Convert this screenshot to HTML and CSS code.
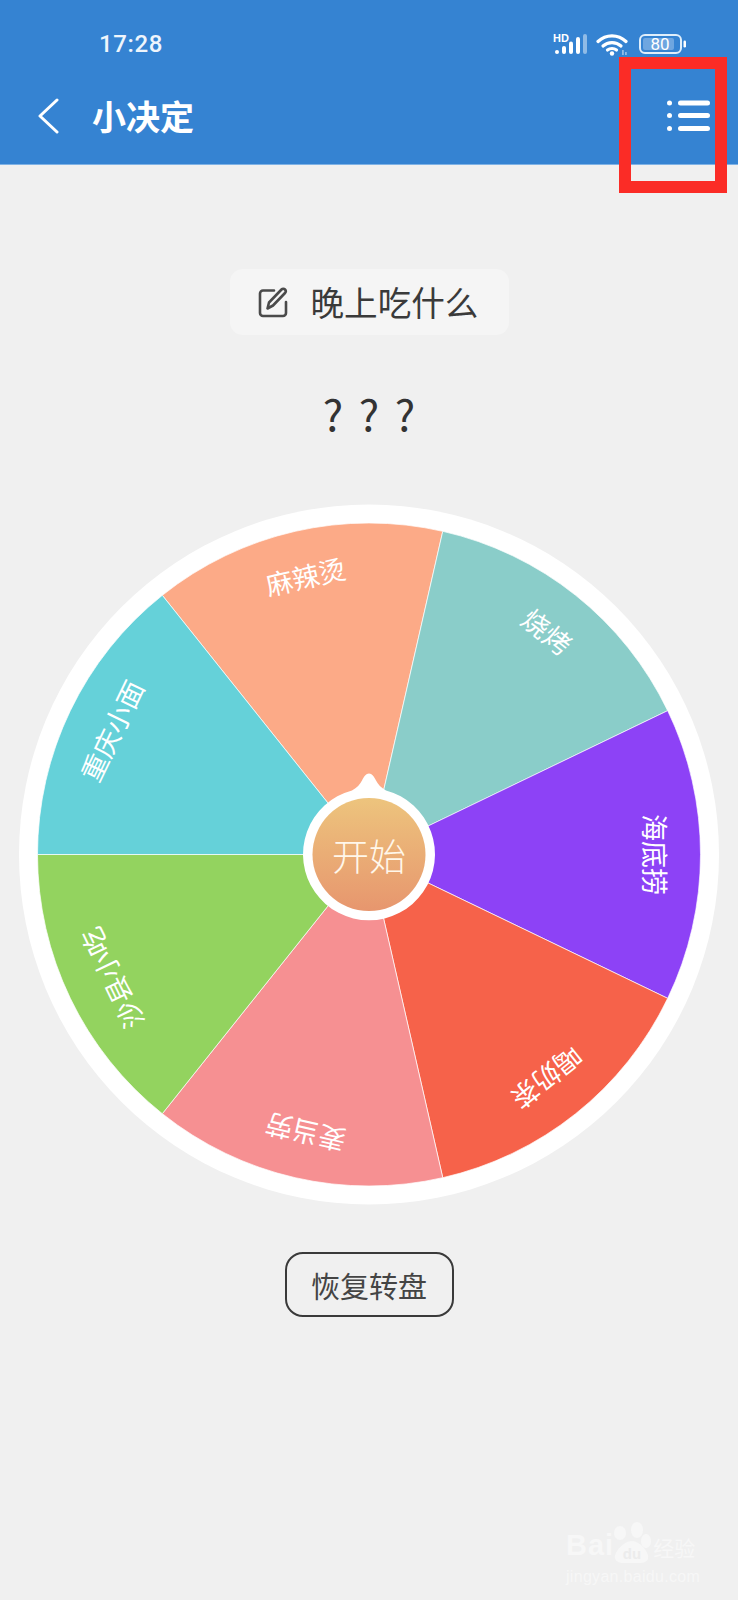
FILE: index.html
```html
<!DOCTYPE html>
<html lang="zh-CN">
<head>
<meta charset="utf-8">
<title>小决定</title>
<link rel="stylesheet" href="styles.css">
</head>
<body>
<div class="page">
  <header class="header">
    <div class="status">
      <span class="time">17:28</span>
      <div class="status-icons">
        <svg class="icon-signal" width="34" height="22" viewBox="0 0 34 22">
          <text class="hd" x="0" y="9">HD</text>
          <rect class="w" x="2" y="17" width="4" height="4" rx="2"/>
          <rect class="w" x="9" y="13" width="4" height="8" rx="2"/>
          <rect class="w" x="16" y="8.500" width="4" height="12.500" rx="2"/>
          <rect class="w" x="23" y="4" width="4" height="17" rx="2"/>
          <rect class="w dim" x="30" y="1" width="4" height="20" rx="2"/>
        </svg>
        <svg class="icon-wifi" width="32" height="23" viewBox="0 0 32 23">
          <path class="arc a1" d="M2 8.500C10 1 22 1 30 8.500"/>
          <path class="arc a2" d="M7 13C12 8.500 20 8.500 25 13"/>
          <path class="arc a3" d="M11.500 17C14 15 18 15 20.500 17"/>
          <circle class="w" cx="16" cy="20.500" r="2.200"/>
          <rect class="w dim" x="26" y="17" width="1.800" height="5"/>
          <rect class="w dim" x="29" y="19" width="1.800" height="3"/>
        </svg>
        <svg class="icon-battery" width="47" height="21" viewBox="0 0 47 21">
          <rect class="batt-o" x="1" y="1" width="41" height="18" rx="5"/>
          <rect class="batt-f" x="4" y="4" width="31" height="12" rx="2"/>
          <text class="batt-t" x="21" y="16" text-anchor="middle">80</text>
          <rect class="w" x="44.500" y="6.500" width="2.500" height="7" rx="1.200"/>
        </svg>
      </div>
    </div>
    <nav class="nav">
      <svg class="back" width="22" height="36" viewBox="0 0 22 36"><path d="M20 2L3 18L20 34"/></svg>
      <h1 class="title">小决定</h1>
      <svg class="menu" width="43" height="32" viewBox="0 0 43 32">
        <circle cx="2.500" cy="3" r="2.500"/><circle cx="2.500" cy="15.500" r="2.500"/><circle cx="2.500" cy="28.500" r="2.500"/>
        <path d="M13.500 3H40.500M13.500 15.500H40.500M13.500 28.500H40.500"/>
      </svg>
    </nav>
  </header>

  <main class="main">
    <div class="pill">
      <svg class="edit" width="30" height="31" viewBox="0 0 30 31">
        <path d="M16 3.500H5a3 3 0 0 0-3 3V26a3 3 0 0 0 3 3h20a3 3 0 0 0 3-3V15"/>
        <path d="M9.500 21.500L11 15.500L23.500 2.500a2.400 2.400 0 0 1 3.500 0a2.600 2.600 0 0 1 0 3.500L15 18.500Z"/>
      </svg>
      <span class="pill-text">晚上吃什么</span>
    </div>
    <div class="result">? ? ?</div>

    <svg class="wheel" width="700" height="701" viewBox="-350 -350.500 700 701">
      <defs>
        <linearGradient id="hubfill" x1="0" y1="0" x2="0" y2="1">
          <stop offset="0" stop-color="#edc47d"/>
          <stop offset="1" stop-color="#e7966e"/>
        </linearGradient>
      </defs>
      <circle class="rim" r="350"/>
      <g transform="rotate(-12.857)">
        <path class="slice s1" d="M0 0L-143.830 -298.670A331.500 331.500 0 0 1 143.830 -298.670Z"/>
        <text class="label" y="-286">麻辣烫</text>
      </g>
      <g transform="rotate(38.571)">
        <path class="slice s2" d="M0 0L-143.830 -298.670A331.500 331.500 0 0 1 143.830 -298.670Z"/>
        <text class="label" y="-286">烧烤</text>
      </g>
      <g transform="rotate(90)">
        <path class="slice s3" d="M0 0L-143.830 -298.670A331.500 331.500 0 0 1 143.830 -298.670Z"/>
        <text class="label" y="-286">海底捞</text>
      </g>
      <g transform="rotate(141.429)">
        <path class="slice s4" d="M0 0L-143.830 -298.670A331.500 331.500 0 0 1 143.830 -298.670Z"/>
        <text class="label" y="-286">喝奶茶</text>
      </g>
      <g transform="rotate(192.857)">
        <path class="slice s5" d="M0 0L-143.830 -298.670A331.500 331.500 0 0 1 143.830 -298.670Z"/>
        <text class="label" y="-286">麦当劳</text>
      </g>
      <g transform="rotate(244.286)">
        <path class="slice s6" d="M0 0L-143.830 -298.670A331.500 331.500 0 0 1 143.830 -298.670Z"/>
        <text class="label" y="-286">沙县小吃</text>
      </g>
      <g transform="rotate(295.714)">
        <path class="slice s7" d="M0 0L-143.830 -298.670A331.500 331.500 0 0 1 143.830 -298.670Z"/>
        <text class="label" y="-286">重庆小面</text>
      </g>
      <path class="hub" d="M0 -81C3 -81 5 -78 7 -74C9 -70 12 -67 17 -64A66 66 0 1 1 -17 -64C-12 -67 -9 -70 -7 -74C-5 -78 -3 -81 0 -81Z"/>
      <circle r="56.500" fill="url(#hubfill)"/>
      <text class="start">开始</text>
    </svg>

    <button class="reset" type="button">恢复转盘</button>
  </main>

  <div class="annotation"></div>

  <div class="watermark">
    <div class="wm-row">
      <span class="wm-bai">Bai</span>
      <svg class="wm-paw" width="38" height="42" viewBox="0 0 38 42">
        <ellipse cx="7" cy="11" rx="6" ry="7"/>
        <ellipse cx="24" cy="8" rx="6" ry="8"/>
        <ellipse cx="33" cy="19" rx="5" ry="7"/>
        <path d="M19 19C27 19 37 31 35 37C33 42 24 41 19 41C12 41 3 42 2 36C1 30 11 19 19 19Z"/>
        <text class="wm-du" x="19" y="37" text-anchor="middle">du</text>
      </svg>
      <span class="wm-cn">经验</span>
    </div>
    <div class="wm-url">jingyan.baidu.com</div>
  </div>
</div>
</body>
</html>
```

FILE: styles.css
```css
* { box-sizing: border-box; }
html, body { margin: 0; padding: 0; }
body {
  background: #f0f0f0;
  font-family: "Noto Sans CJK SC", "Noto Sans", sans-serif;
}
.page {
  position: relative;
  width: 738px;
  height: 1600px;
  overflow: hidden;
  background: #f0f0f0;
}

/* header */
.header {
  height: 165px;
  background: #3583d2;
  border-bottom: 1px solid #7fb2e5;
  color: #fff;
}
.status {
  height: 88px;
  display: flex;
  align-items: center;
  justify-content: space-between;
  padding: 0 52px 0 99px;
}
.time {
  font-family: Roboto, sans-serif;
  font-size: 24px;
  font-weight: 500;
  color: #eef5fc;
  letter-spacing: 0.6px;
}
.status-icons {
  display: flex;
  align-items: center;
  gap: 9px;
}
.status-icons svg { display: block; }
.icon-battery { margin-left: 2px; }
.w { fill: #fff; }
.dim { opacity: 0.45; }
.hd {
  font-family: "Liberation Sans", sans-serif;
  font-size: 11px;
  font-weight: 700;
  fill: #fff;
}
.arc {
  fill: none;
  stroke: #fff;
  stroke-width: 3.200;
  stroke-linecap: round;
}
.batt-o {
  fill: none;
  stroke: #dfeefb;
  stroke-width: 2;
}
.batt-f { fill: #6ea6e0; }
.batt-t {
  font-family: Roboto, sans-serif;
  font-size: 17px;
  fill: #fff;
}
.nav {
  height: 76px;
  display: flex;
  align-items: center;
  padding: 0 28px 0 37px;
  margin-top: -10px;
}
.back { display: block; }
.back path {
  fill: none;
  stroke: #fff;
  stroke-width: 3;
  stroke-linecap: round;
  stroke-linejoin: round;
}
.title {
  margin: 0 0 0 33px;
  flex: 1;
  font-size: 34px;
  font-weight: 700;
  line-height: 44px;
  color: #fff;
}
.menu { display: block; }
.menu circle { fill: #fff; }
.menu path {
  fill: none;
  stroke: #fff;
  stroke-width: 5;
  stroke-linecap: round;
}

/* main */
.main {
  display: flex;
  flex-direction: column;
  align-items: center;
  padding-top: 104px;
}
.pill {
  width: 279px;
  height: 66px;
  display: flex;
  align-items: center;
  gap: 23px;
  padding-left: 28px;
  background: #f5f5f5;
  border-radius: 13px;
}
.edit { display: block; flex: none; }
.edit path {
  fill: none;
  stroke: #4a4a4a;
  stroke-width: 2.600;
  stroke-linecap: round;
  stroke-linejoin: round;
}
.pill-text {
  font-size: 33.600px;
  line-height: 44px;
  color: #3a3a3a;
  white-space: nowrap;
}
.result {
  margin-top: 50px;
  height: 60px;
  font-size: 43px;
  line-height: 55px;
  word-spacing: 6px;
  color: #333;
}
.wheel {
  display: block;
  margin-top: 59px;
  flex: none;
}
.rim { fill: #fff; }
.slice { stroke: #fff; stroke-width: 0.800; stroke-opacity: 0.8; }
.s1 { fill: #fcaa87; }
.s2 { fill: #8acdc9; }
.s3 { fill: #8d42f6; }
.s4 { fill: #f6624a; }
.s5 { fill: #f69092; }
.s6 { fill: #93d35f; }
.s7 { fill: #65d1d9; }
.label {
  font-size: 27px;
  font-weight: 400;
  fill: #fff;
  text-anchor: middle;
  dominant-baseline: central;
}
.hub { fill: #fff; }
.start {
  font-size: 37px;
  font-weight: 300;
  fill: #fff7ea;
  text-anchor: middle;
  dominant-baseline: central;
}
.reset {
  display: block;
  margin-top: 47px;
  width: 169px;
  height: 65px;
  background: transparent;
  border: 2px solid #3a3a3a;
  border-radius: 18px;
  padding: 0;
  font-family: inherit;
  font-size: 29px;
  color: #444;
}

/* red annotation drawn over the screenshot */
.annotation {
  position: absolute;
  left: 619px;
  top: 57px;
  width: 108px;
  height: 136px;
  border: 12px solid #fb2c26;
}

/* watermark */
.watermark {
  position: absolute;
  left: 566px;
  top: 1522px;
  width: 140px;
  color: #f7f7f7;
}
.wm-row {
  display: flex;
  align-items: flex-end;
  height: 42px;
}
.wm-bai {
  font-family: "Liberation Sans", sans-serif;
  font-size: 29px;
  font-weight: 700;
  line-height: 38px;
  letter-spacing: 1px;
}
.wm-paw { display: block; margin-left: -1px; flex: none; }
.wm-paw ellipse, .wm-paw path { fill: #f7f7f7; }
.wm-du {
  font-family: "Liberation Sans", sans-serif;
  font-size: 15px;
  font-weight: 700;
  fill: #ececec;
}
.wm-cn {
  font-size: 21px;
  line-height: 30px;
  margin: 0 0 2px 2px;
}
.wm-url {
  margin-top: 3px;
  font-family: "Liberation Sans", sans-serif;
  font-size: 16px;
  line-height: 20px;
  letter-spacing: 0.3px;
  white-space: nowrap;
}
```
